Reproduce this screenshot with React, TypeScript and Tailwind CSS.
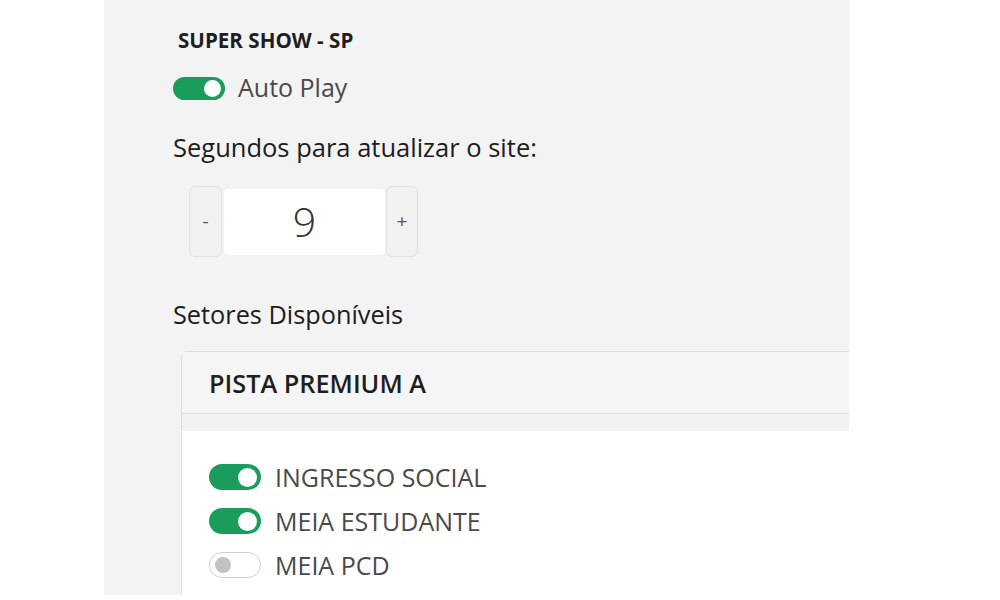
const font = "font-['Open_Sans','Noto_Sans',sans-serif]";

function Toggle(props: { on: boolean; small?: boolean }) {
  const size = props.small ? "h-[23px] w-[52px]" : "h-[26px] w-[52px]";
  if (props.on) {
    return (
      <span className={`${size} flex shrink-0 items-center justify-end rounded-full bg-[#1a9c5c] pr-[4px]`}>
        <span className={`${props.small ? "size-[17px]" : "size-[19px]"} rounded-full bg-white`} />
      </span>
    );
  }
  return (
    <span className={`${size} flex shrink-0 items-center rounded-full border border-[#cfcfcf] bg-white pl-[5px]`}>
      <span className="size-[16px] rounded-full bg-[#c2c2c2]" />
    </span>
  );
}

function Option(props: { label: string; on: boolean }) {
  return (
    <label className="flex h-[44px] items-center gap-[14px]">
      <Toggle on={props.on} />
      <span className="text-[25px] leading-[24px] text-[#4a4a4a]">{props.label}</span>
    </label>
  );
}

export default function App() {
  return (
    <div className={`h-[600px] w-[1000px] bg-white ${font}`}>
      <div className="ml-[104px] flex h-[595px] w-[745px] flex-col overflow-hidden bg-[#f3f3f3] pl-[69px] pt-[28px]">
        <h1 className="ml-[5px] text-[20.6px] font-bold leading-[24px] text-[#1e1e1e]">SUPER SHOW - SP</h1>

        <label className="mt-[24px] flex h-[24px] items-center gap-[13px]">
          <Toggle on small />
          <span className="-mt-[2px] text-[25px] leading-[24px] text-[#4a4a4a]">Auto Play</span>
        </label>

        <p className="mt-[31px] text-[25.5px] font-medium leading-[32px] text-[#1c1c1c]">
          Segundos para atualizar o site:
        </p>

        <div className="ml-[16px] mt-[23px] flex h-[71px] items-center">
          <button
            type="button"
            className="h-full w-[33px] rounded-[6px] border border-[#e2e2e2] bg-[#f1f1f1] text-[19px] text-[#555]"
          >
            -
          </button>
          <div className="ml-[2px] mr-[1px] flex h-[66px] w-[161px] items-center justify-center rounded-[4px] bg-white text-[41px] font-light leading-none text-[#333]">
            9
          </div>
          <button
            type="button"
            className="h-full w-[32px] rounded-[6px] border border-[#e2e2e2] bg-[#f1f1f1] text-[19px] text-[#555]"
          >
            +
          </button>
        </div>

        <p className="mt-[41px] text-[25.3px] font-medium leading-[32px] text-[#1c1c1c]">Setores Disponíveis</p>

        <div className="ml-[8px] mt-[21px] w-[720px] flex-1 rounded-tl-[6px] border-l border-t border-[#dedede] bg-white">
          <div className="flex h-[62px] items-center border-b border-[#dedede] bg-[#f5f5f5] pl-[27px]">
            <span className="text-[25.3px] font-semibold leading-[32px] text-[#1e1e1e]">PISTA PREMIUM A</span>
          </div>
          <div className="h-[17px] bg-[#f2f2f2]" />
          <div className="pl-[27px] pt-[24px]">
            <Option label="INGRESSO SOCIAL" on />
            <Option label="MEIA ESTUDANTE" on />
            <Option label="MEIA PCD" on={false} />
          </div>
        </div>
      </div>
    </div>
  );
}
